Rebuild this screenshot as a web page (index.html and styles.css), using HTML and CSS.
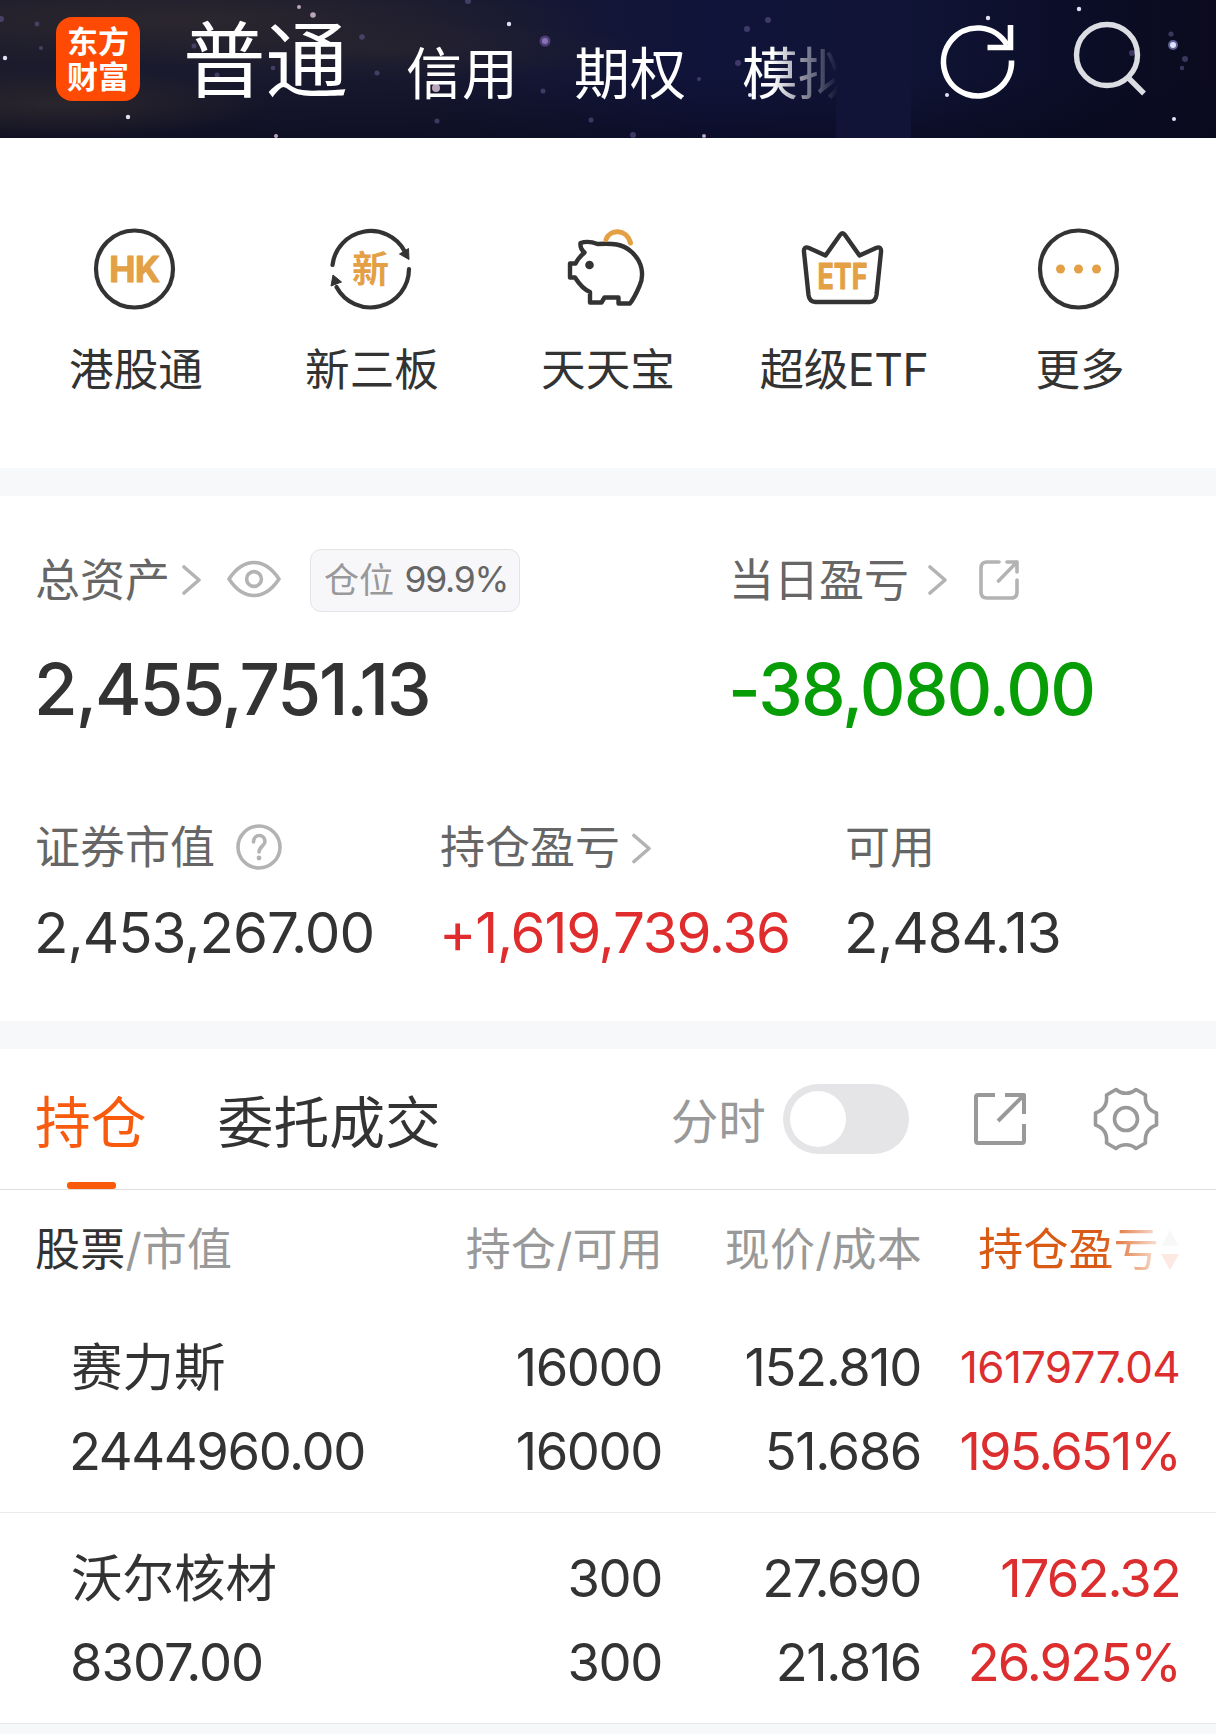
FILE: index.html
```html
<!DOCTYPE html>
<html lang="zh-CN">
<head>
<meta charset="utf-8">
<title>东方财富</title>
<link rel="stylesheet" href="styles.css">
</head>
<body>
<header class="top">
  <svg class="stars" width="1216" height="138" viewBox="0 0 1216 138" aria-hidden="true">
    <defs>
      <radialGradient id="dust"><stop offset="0" stop-color="#38302f" stop-opacity=".6"/><stop offset="1" stop-color="#38302f" stop-opacity="0"/></radialGradient>
    </defs>
    <ellipse cx="190" cy="20" rx="420" ry="46" fill="url(#dust)"/>
    <ellipse cx="60" cy="104" rx="210" ry="34" fill="url(#dust)"/>
    <ellipse cx="400" cy="50" rx="260" ry="30" fill="url(#dust)" opacity=".6"/>
    <g fill="#6d5f9c" opacity=".5">
      <circle cx="1" cy="19" r="3"/><circle cx="37" cy="24" r="2.4"/><circle cx="41" cy="48" r="2"/><circle cx="194" cy="46" r="2.5"/>
      <circle cx="273" cy="68" r="2.3"/><circle cx="217" cy="75" r="2.5"/><circle cx="362" cy="37" r="2.8"/><circle cx="377" cy="73" r="2.5"/>
      <circle cx="468" cy="1" r="3"/><circle cx="543" cy="91" r="2.5"/><circle cx="437" cy="121" r="2.5"/><circle cx="591" cy="120" r="2.5"/>
      <circle cx="747" cy="29" r="3"/><circle cx="768" cy="20" r="3"/><circle cx="738" cy="63" r="3"/><circle cx="699" cy="79" r="2"/>
      <circle cx="633" cy="135" r="3"/><circle cx="1171" cy="34" r="2.6"/><circle cx="1185" cy="59" r="3"/><circle cx="1182" cy="68" r="2.2"/><circle cx="1132" cy="53" r="3"/>
    </g>
    <circle cx="545" cy="41" r="5.5" fill="#4d3f78"/><circle cx="545" cy="41" r="3" fill="#8a72b4"/>
    <circle cx="1173" cy="45" r="5" fill="#5c5f99"/>
    <g fill="#dfe2f6">
      <circle cx="5" cy="58" r="2.2"/><circle cx="128" cy="117" r="2.2"/><circle cx="509" cy="24" r="2.2"/><circle cx="1173" cy="45" r="3"/>
      <circle cx="1079" cy="9" r="2.2"/><circle cx="988" cy="18" r="2.2"/><circle cx="947" cy="95" r="2"/><circle cx="1174" cy="119" r="2"/><circle cx="750" cy="95" r="2"/>
    </g>
    <g fill="#b9a5bd">
      <circle cx="313" cy="15" r="2.8"/><circle cx="299" cy="7" r="2"/><circle cx="276" cy="136" r="2"/><circle cx="436" cy="88" r="4"/><circle cx="704" cy="136" r="2"/>
    </g>
    <rect x="836" width="75" height="138" fill="#111436"/>
  </svg>
  <div class="logo"><span>东方</span><span>财富</span></div>
  <nav class="modes">
    <span class="mode mode-on">普通</span>
    <span class="mode">信用</span>
    <span class="mode">期权</span>
    <span class="mode mode-fade">模拟</span>
  </nav>
  <svg class="refresh" width="80" height="84" viewBox="0 0 80 84" fill="none" stroke="#fff" stroke-width="5.6">
    <path d="M72.500 43.500A34 34 0 1 1 68 28"/><path d="M71.500 8v22.500H48.500"/>
  </svg>
  <svg class="search" width="84" height="84" viewBox="0 0 84 84" fill="none" stroke="#dcdce3" stroke-width="5.400">
    <circle cx="37" cy="37" r="30.500"/><path d="M58.500 60 74 75.500"/>
  </svg>
</header>

<section class="quick">
  <div class="quick-item">
    <svg width="96" height="96" viewBox="-46.500 -48 96 96"><circle r="38.500" fill="none" stroke="#333" stroke-width="4.200"/><text class="ico-hk" y="12.500" text-anchor="middle">HK</text></svg>
    <span>港股通</span>
  </div>
  <div class="quick-item">
    <svg width="96" height="96" viewBox="-46.500 -48 96 96"><g fill="none" stroke="#333" stroke-width="4.200" stroke-linecap="round"><path d="M-38 -4A38.500 38.500 0 0 1 34 -18"/><path d="M38.500 0A38.500 38.500 0 0 1 -34 18"/></g><path d="M29 -15 38 -20.500 38.500 -9.500zM-39.500 17-37.500 6-29 13z" fill="#333" stroke="#333" stroke-linejoin="round"/><text class="ico-xin" y="13.500" text-anchor="middle">新</text></svg>
    <span>新三板</span>
  </div>
  <div class="quick-item">
    <svg width="96" height="96" viewBox="-44.500 -48 96 96" fill="none" stroke="#333" stroke-width="4.400" stroke-linejoin="round"><path d="M-7 -25C8 -26 18 -25 26 -18C38 -8 40 6 35 17C32 24 29 30 25.500 34.500H14V28.500H0L-3 33.500H-14.500V23C-22 20 -26 14 -29.500 8.500H-34.500V-5.500H-29C-27 -10 -24 -13 -20 -16.500C-23 -19 -24.500 -22 -24 -26C-18 -28 -12 -27 -7 -25Z"/><circle cx="-15" cy="-4" r="4.300" fill="#333" stroke="none"/><path d="M1.500-29.500C5-40 22-41 26-26" stroke="#e3a044" stroke-width="5" stroke-linecap="round"/></svg>
    <span>天天宝</span>
  </div>
  <div class="quick-item">
    <svg width="96" height="96" viewBox="-46.500 -48 96 96"><path d="M-38.500-17C-39-21-37-22.500-33.500-21L-17-13.500-2.500-34Q0-37.500 2.500-34L17-13.500 33.500-21C37-22.500 39-21 38.500-17L34 26Q33 33 27 33H-27Q-33 33-34 26Z" fill="none" stroke="#333" stroke-width="4.400" stroke-linejoin="round"/><text class="ico-etf" y="19.500" text-anchor="middle" textLength="50" lengthAdjust="spacingAndGlyphs">ETF</text></svg>
    <span class="etf-label">超级ETF</span>
  </div>
  <div class="quick-item">
    <svg width="96" height="96" viewBox="-46.500 -48 96 96"><circle r="38.500" fill="none" stroke="#333" stroke-width="4.200"/><g fill="#e3a044"><circle cx="-18" r="4.500"/><circle r="4.500"/><circle cx="18" r="4.500"/></g></svg>
    <span>更多</span>
  </div>
</section>

<section class="assets">
  <div class="totals">
    <div class="total">
      <div class="label"><span>总资产</span><svg class="chev gap-l" width="22" height="32" viewBox="0 0 22 32"><path d="M3 3 18 16 3 29"/></svg>
        <svg class="eye" width="56" height="44" viewBox="0 0 56 44"><path d="M3 21Q14 4.500 28 4.500T53 21Q42 37.500 28 37.500T3 21Z"/><circle cx="28" cy="21" r="7.400"/></svg>
        <span class="badge"><span>仓位</span><b>99.9%</b></span>
      </div>
      <div class="big big-total">2,455,751.13</div>
    </div>
    <div class="total">
      <div class="label"><span>当日盈亏</span><svg class="chev gap-m" width="22" height="32" viewBox="0 0 22 32"><path d="M3 3 18 16 3 29"/></svg>
        <svg class="share" width="42" height="42" viewBox="0 0 42 42"><path d="M21 3H9Q3 3 3 9V33Q3 39 9 39H33Q39 39 39 33V21M29 3H39V13M39 3 20.500 22"/></svg>
      </div>
      <div class="big big-day">-38,080.00</div>
    </div>
  </div>
  <div class="stats">
    <div class="stat">
      <div class="label">证券市值<svg class="help" width="48" height="48" viewBox="-24 -23 48 48"><circle r="21"/><path d="M-5.500-5C-5.500-13.500 6-13.500 6-5.500C6-1.500 0 0 0 5"/><circle class="dot" cy="11" r="2.400"/></svg></div>
      <div class="value v-market">2,453,267.00</div>
    </div>
    <div class="stat">
      <div class="label">持仓盈亏<svg class="chev gap-l" width="22" height="32" viewBox="0 -.5 22 32"><path d="M3 3 18 16 3 29"/></svg></div>
      <div class="value v-profit">+1,619,739.36</div>
    </div>
    <div class="stat">
      <div class="label">可用</div>
      <div class="value v-cash">2,484.13</div>
    </div>
  </div>
</section>

<section class="holdings">
  <div class="tabs">
    <span class="tab tab-on">持仓</span>
    <span class="tab">委托成交</span>
    <span class="switch-label">分时</span>
    <span class="switch"></span>
    <svg class="open" width="56" height="56" viewBox="0 0 56 56"><path d="M23 4H6Q4 4 4 6V50Q4 52 6 52H50Q52 52 52 50V33M33 4H52V23M52 4 26 30"/></svg>
    <svg class="gear" width="68" height="68" viewBox="-34 -34 68 68"><circle r="11.500"/><path d="M-10-29.500C-4-24.500 4-24.500 10-29.500L19.500-24C18.500-15 22-9 30.500-6V6C22 9 18.500 15 19.500 24L10 29.500C4 24.500-4 24.500-10 29.500L-19.500 24C-18.500 15-22 9-30.500 6V-6C-22-9-18.500-15-19.500-24Z"/></svg>
  </div>
  <div class="row head">
    <span class="c1"><b>股票</b>/市值</span><span>持仓/可用</span><span>现价/成本</span>
    <span class="sorted"><em>持仓盈亏</em><svg width="20" height="42" viewBox="0 0 20 42"><path d="M10 1 19 17H1Z" fill="#f8f8f8"/><path d="M1 25H19L10 41Z" fill="#fde9e2"/></svg></span>
  </div>
  <div class="row">
    <span class="c1 name">赛力斯</span><span>16000</span><span>152.810</span><span class="up small">1617977.04</span>
    <span class="c1">2444960.00</span><span>16000</span><span>51.686</span><span class="up pct">195.651%</span>
  </div>
  <div class="row">
    <span class="c1 name">沃尔核材</span><span>300</span><span>27.690</span><span class="up">1762.32</span>
    <span class="c1 wide">8307.00</span><span>300</span><span>21.816</span><span class="up pct">26.925%</span>
  </div>
</section>
</body>
</html>
```
FILE: styles.css
```css
* { box-sizing: border-box; }

body {
  margin: 0;
  width: 1216px;
  height: 1734px;
  overflow: hidden;
  background: #f7f8fa;
  color: #333;
  font-family: Inter, "Noto Sans CJK SC", sans-serif;
}

svg { display: block; flex: none; }

/* Header */
.top {
  position: relative;
  display: flex;
  height: 138px;
  padding-left: 56px;
  color: #fff;
  background: linear-gradient(180deg, transparent 55%, rgba(8, 9, 28, .55)),
    linear-gradient(90deg, #1b1b2c 0, #17182f 35%, #10143a 58%, #101435 75%, #0b0d26 90%, #0c0b1e 100%);
}
.stars { position: absolute; left: 0; top: 0; }
.logo {
  position: relative;
  flex: none;
  width: 84px;
  height: 84px;
  margin-top: 17px;
  padding-top: 7px;
  border-radius: 16px;
  background: #ff4a03;
  text-align: center;
  font: 700 31px/35px Inter, "Noto Sans CJK SC", sans-serif;
}
.logo span { display: block; }
.modes { position: relative; display: flex; flex: none; width: 769px; padding-left: 43px; }
.mode { flex: none; width: 168px; font-size: 56px; line-height: 149px; white-space: nowrap; }
.mode-on { width: 223px; font-size: 82.5px; line-height: 123px; }
.mode-fade {
  -webkit-mask-image: linear-gradient(90deg, #000 30px, transparent 96px);
  mask-image: linear-gradient(90deg, #000 30px, transparent 96px);
}
.refresh { position: relative; margin: 17px 0 0 30px; }
.search { position: relative; margin: 18px 0 0 51px; }

/* Shortcuts */
.quick {
  display: grid;
  grid-template-columns: repeat(5, 236px);
  height: 330px;
  padding: 83px 0 0 18px;
  background: #fff;
}
.quick-item { display: flex; flex-direction: column; align-items: center; font-size: 44.6px; line-height: 60px; }
.quick-item span { margin-top: 23px; }
.quick-item .etf-label { letter-spacing: -.4px; }
.ico-hk, .ico-xin, .ico-etf { fill: #e3a044; font-weight: 700; }
.ico-hk { font-size: 35px; letter-spacing: -.5px; stroke: #e3a044; stroke-width: 1px; stroke-linejoin: round; }
.ico-xin { font-size: 37px; }
.ico-etf { font-size: 36px; stroke: #e3a044; stroke-width: 1px; stroke-linejoin: round; }

/* Assets */
.assets { height: 525px; margin-top: 28px; padding: 49px 0 0 35px; background: #fff; }
.totals { display: grid; grid-template-columns: 694px 1fr; }
.label { display: flex; align-items: center; height: 70px; font-size: 45px; line-height: 70px; color: #666; white-space: nowrap; }
.label > span:first-child { line-height: 70px; padding-top: 2px; }
.chev path, .eye, .share, .help { fill: none; stroke: #b3b3b3; stroke-width: 3.6; stroke-linecap: round; stroke-linejoin: round; }
.gap-l { margin-left: 11px; }
.gap-m { margin-left: 18px; }
.eye { margin-left: 23px; }
.share { margin-left: 29px; }
.help { margin-left: 20px; }
.help .dot { fill: #b3b3b3; stroke: none; }
.badge {
  display: flex;
  align-items: center;
  justify-content: space-between;
  width: 210px;
  height: 63px;
  margin-left: 28px;
  padding: 0 11px 0 13px;
  border: 1px solid #e4e4e6;
  border-radius: 11px;
  background: #f7f7fa;
  font-size: 35px;
  color: #999;
}
.badge b { font-weight: 400; font-size: 35.5px; letter-spacing: -1.3px; color: #666; }
.big { margin: 34px 0 0 -1px; font-size: 71px; font-weight: 500; line-height: 80px; letter-spacing: -2.1px; }
.big-day { letter-spacing: -1.9px; color: #079d07; }
.stats { display: grid; grid-template-columns: 405px 405px 1fr; margin-top: 84px; }
.value { margin: 20px 0 0 -1px; font-size: 56.5px; line-height: 60px; letter-spacing: -1.2px; white-space: nowrap; }
.v-market { letter-spacing: -1px; }
.v-profit { color: #e02c2c; }

/* Holdings */
.holdings { height: 675px; margin-top: 28px; background: #fff; border-bottom: 1px solid #e8e8ea; }
.tabs { display: flex; align-items: center; height: 141px; padding-left: 35px; border-bottom: 1px solid #dedee0; }
.tab { position: relative; height: 140px; margin-right: 71px; font-size: 55.8px; line-height: 147px; }
.tab-on { color: #f95b0e; }
.tab-on::after {
  content: "";
  position: absolute;
  left: 32px;
  bottom: 0;
  width: 49px;
  height: 7px;
  border-radius: 3px;
  background: #fa5a0c;
}
.switch-label { height: 140px; margin-left: 159px; font-size: 47.5px; line-height: 146px; color: #999; }
.switch { width: 126px; height: 70px; margin-left: 17px; padding: 7px; border-radius: 35px; background: #e5e5e7; }
.switch::before { content: ""; display: block; width: 56px; height: 56px; border-radius: 50%; background: #fff; }
.open, .gear { fill: none; stroke: #999; stroke-width: 4; stroke-linejoin: round; stroke-linecap: butt; }
.open { margin-left: 63px; }
.gear { margin-left: 64px; stroke-width: 3.6; }

.row {
  display: grid;
  grid-template-columns: 393px 200px 259px 259px;
  grid-auto-rows: 84px;
  height: 211px;
  padding: 23px 0 0 69px;
  border-bottom: 1px solid #ebebed;
  font-size: 52.5px;
  line-height: 84px;
  letter-spacing: -1.4px;
  text-align: right;
  white-space: nowrap;
}
.row:last-child { border-bottom: 0; }
.c1 { text-align: left; }
.wide { letter-spacing: -1px; text-indent: 1px; }
.name { font-size: 51.5px; letter-spacing: 0; text-indent: 2px; }
.up { color: #dc2e2e; letter-spacing: -1.9px; }
.small { font-size: 44px; letter-spacing: -.7px; }
.head {
  grid-template-columns: 428px 200px 259px 258px;
  height: 112px;
  padding: 18px 0 0 35px;
  border: 0;
  font-size: 45px;
  letter-spacing: .2px;
  color: #999;
}
.head + .row { height: 211px; }
.head b { font-weight: 400; color: #333; }
.sorted { display: flex; align-items: center; justify-content: flex-end; }
.sorted em {
  font-style: normal;
  color: #d95a14;
  -webkit-mask-image: linear-gradient(90deg, #000 125px, transparent 192px);
  mask-image: linear-gradient(90deg, #000 125px, transparent 192px);
}
.sorted svg { margin-left: 1px; }
```
